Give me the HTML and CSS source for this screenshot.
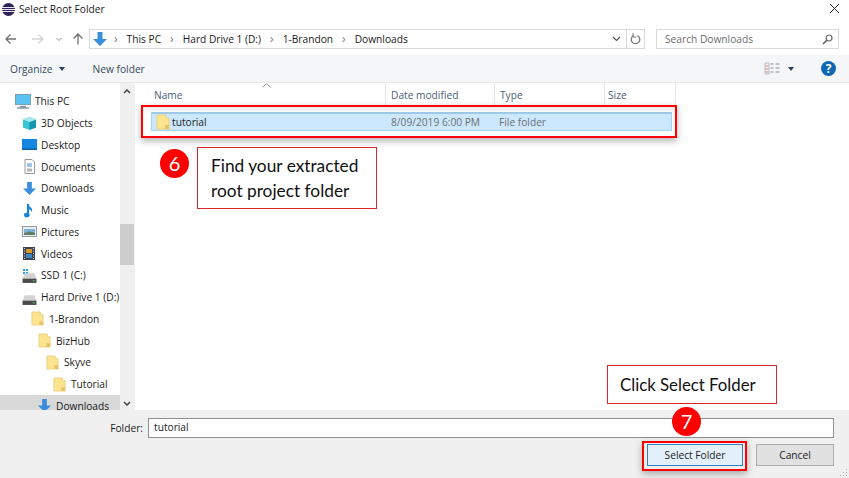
FILE: index.html
```html
<!DOCTYPE html>
<html lang="en">
<head>
    <meta charset="UTF-8">
    <title>Select Root Folder</title>
    <link rel="stylesheet" href="styles.css">
</head>
<body>
    <svg class="defs" width="0" height="0">
        <symbol id="folder" viewBox="0 0 14 16">
            <path d="M1 1h9v3h3v11H1z" fill="#fde48f" stroke="#ecd27e"/>
            <path d="M9 15v-4h4v4z" fill="#e5c365"/>
        </symbol>
        <symbol id="down" viewBox="0 0 16 16">
            <path d="M5.5 1h5v7H15l-7 7-7-7h4.500z" fill="#3a8fdc"/>
        </symbol>
        <symbol id="drive" viewBox="0 0 14 14">
            <path d="M2.500 4h9l2 5H.5z" fill="#d2d2d2"/>
            <rect x="0.500" y="9" width="13" height="4" fill="#4a4a4a"/>
            <rect x="10" y="10.500" width="2" height="1" fill="#4fc35a"/>
        </symbol>
    </svg>

    <div class="titlebar">
        <svg class="app-icon" width="13" height="13" viewBox="0 0 13 13">
            <circle cx="6.500" cy="6.500" r="6.500" fill="#2c2255"/>
            <path d="M0 4.500h13M0 6.500h13M0 8.500h13" stroke="#e8e6f2" stroke-width="1"/>
        </svg>
        <span class="title">Select Root Folder</span>
        <svg class="close" width="11" height="11" viewBox="0 0 11 11">
            <path d="M1 1l9 9M10 1l-9 9" stroke="#222" stroke-width="1" fill="none"/>
        </svg>
    </div>

    <div class="addressrow">
        <div class="nav">
            <svg width="78" height="14" viewBox="0 0 78 14">
                <path d="M11 7H1M5.500 2.500L1 7l4.500 4.500" stroke="#6f6f6f" stroke-width="1.300" fill="none"/>
                <path d="M27 7h11M33.500 2.500L38 7l-4.500 4.500" stroke="#d4d4d4" stroke-width="1.300" fill="none"/>
                <path d="M51.500 6l2.500 2.500L56.500 6" stroke="#8a8a8a" stroke-width="1" fill="none"/>
                <path d="M73 12.500V2M68.500 6.500L73 2l4.500 4.500" stroke="#6f6f6f" stroke-width="1.300" fill="none"/>
            </svg>
        </div>
        <div class="addressbar">
            <svg class="crumb-icon" width="16" height="16"><use href="#down"/></svg>
            <span class="sep">›</span><span>This PC</span>
            <span class="sep">›</span><span>Hard Drive 1 (D:)</span>
            <span class="sep">›</span><span>1-Brandon</span>
            <span class="sep">›</span><span>Downloads</span>
            <svg class="chev" width="9" height="6" viewBox="0 0 9 6">
                <path d="M1 1l3.500 3.500L8 1" stroke="#555" stroke-width="1.200" fill="none"/>
            </svg>
            <div class="refresh">
                <svg width="11" height="12" viewBox="0 0 11 12">
                    <path d="M7.500 2.600A4.300 4.300 0 1 1 3.500 2.600" stroke="#7a7a7a" stroke-width="1.300" fill="none"/>
                    <path d="M3 0v4h3.500" stroke="#7a7a7a" stroke-width="1" fill="none"/>
                </svg>
            </div>
        </div>
        <div class="searchbox">
            <span>Search Downloads</span>
            <svg width="11" height="11" viewBox="0 0 11 11">
                <circle cx="7" cy="4" r="3" stroke="#666" stroke-width="1.200" fill="none"/>
                <path d="M5 6.200L1 10" stroke="#666" stroke-width="1.600"/>
            </svg>
        </div>
    </div>

    <div class="toolbar">
        <span class="tool organize">Organize</span>
        <span class="caret"></span>
        <span class="tool newfolder">New folder</span>
        <svg class="views" width="16" height="13" viewBox="0 0 15 13">
            <path d="M.5 1h4v11h-4z" fill="#f4f4f4" stroke="#b9b9b9"/>
            <path d="M1 4h3M1 7h3M1 10h3" stroke="#d08a8a"/>
            <path d="M6 2h3M11 2h4M6 6h3M11 6h4M6 10h3M11 10h4" stroke="#8a8a8a"/>
        </svg>
        <span class="caret caret-views"></span>
        <span class="help">?</span>
    </div>

    <div class="main">
        <div class="sidebar">
            <div class="navitem"><svg class="pc" width="16" height="15" viewBox="0 0 16 15"><rect x="0.500" y="0.500" width="15" height="10" fill="#5cc2f2" stroke="#7f9fb5"/><path d="M5 12.500h6M2 14h12" stroke="#8a9aa8" stroke-width="1.400"/></svg><span>This PC</span></div>
            <div class="navitem lv1"><svg width="15" height="15" viewBox="0 0 15 15"><path d="M7.500 1L14 3.500v8L7.500 14 1 11.500v-8z" fill="#35c5d4"/><path d="M7.500 6L14 3.500v8L7.500 14z" fill="#1697ad"/><path d="M7.500 1L14 3.500 7.500 6 1 3.500z" fill="#a5e8ef"/></svg><span>3D Objects</span></div>
            <div class="navitem lv1"><svg width="15" height="13" viewBox="0 0 15 13"><rect width="15" height="11" y="1" fill="#1487e0"/><rect y="10.500" width="15" height="1.500" fill="#0d5fa8"/></svg><span>Desktop</span></div>
            <div class="navitem lv1"><svg width="15" height="15" viewBox="0 0 15 15"><path d="M3 .5h7l2.500 2.500v11.500H3z" fill="#fff" stroke="#9a9a9a"/><path d="M5 5h5M5 7h5" stroke="#3b8fd0"/><path d="M5 9.500h5v3H5z" fill="#b5b5b5"/></svg><span>Documents</span></div>
            <div class="navitem lv1"><svg width="15" height="15"><use href="#down"/></svg><span>Downloads</span></div>
            <div class="navitem lv1"><svg width="15" height="15" viewBox="0 0 15 15"><path d="M6 1v10.500" stroke="#1583dd" stroke-width="2"/><ellipse cx="4.800" cy="12" rx="2.800" ry="2.300" fill="#1583dd"/><path d="M6 1c1 3 5 3.500 4 8-1-2-2.500-3-4-3z" fill="#1583dd"/></svg><span>Music</span></div>
            <div class="navitem lv1"><svg width="15" height="13" viewBox="0 0 15 13"><rect x=".5" y="1.500" width="14" height="10" fill="#e6eef5" stroke="#9a9a9a"/><path d="M2 4h11v3l-5 1-6 1z" fill="#7fb2d6"/><path d="M2 8l5-1.500 6 1V10H2z" fill="#5f7f68"/></svg><span>Pictures</span></div>
            <div class="navitem lv1"><svg width="15" height="13" viewBox="0 0 15 13"><rect x="1" y="0" width="12" height="13" fill="#3f4452"/><path d="M2 1.500h1M2 4h1M2 6.500h1M2 9h1M2 11.500h1M11 1.500h1M11 4h1M11 6.500h1M11 9h1M11 11.500h1" stroke="#cfd3da"/><rect x="4" y="2" width="6" height="4" fill="#d89a2c"/><rect x="4" y="7" width="6" height="4" fill="#3f88c5"/></svg><span>Videos</span></div>
            <div class="navitem lv1"><svg width="15" height="15" viewBox="0 0 15 15"><path d="M1 1h2v2H1zM4 1h2v2H4zM1 4h2v2H1zM4 4h2v2H4z" fill="#1aa5ea"/><use href="#drive" y="1"/></svg><span>SSD 1 (C:)</span></div>
            <div class="navitem lv1"><svg width="15" height="15"><use href="#drive" y="1"/></svg><span>Hard Drive 1 (D:)</span></div>
            <div class="navitem lv2"><svg width="13" height="15"><use href="#folder"/></svg><span>1-Brandon</span></div>
            <div class="navitem lv3"><svg width="13" height="15"><use href="#folder"/></svg><span>BizHub</span></div>
            <div class="navitem lv4"><svg width="13" height="15"><use href="#folder"/></svg><span>Skyve</span></div>
            <div class="navitem lv5"><svg width="13" height="15"><use href="#folder"/></svg><span>Tutorial</span></div>
            <div class="navitem lv6 current"><svg width="15" height="15"><use href="#down"/></svg><span>Downloads</span></div>
        </div>
        <div class="scrollbar">
            <svg class="arrow" width="8" height="5" viewBox="0 0 8 5"><path d="M1 4l3-3 3 3" stroke="#444" stroke-width="1.500" fill="none"/></svg>
            <div class="track"><div class="thumb"></div></div>
            <svg class="arrow" width="8" height="5" viewBox="0 0 8 5"><path d="M1 1l3 3 3-3" stroke="#444" stroke-width="1.500" fill="none"/></svg>
        </div>
        <div class="files">
            <svg class="sortmark" width="9" height="5" viewBox="0 0 9 5"><path d="M.5 4.500l4-4 4 4" stroke="#9a9a9a" fill="none"/></svg>
            <div class="fileheader">
                <div class="col col-name">Name</div>
                <div class="col col-date">Date modified</div>
                <div class="col col-type">Type</div>
                <div class="col col-size">Size</div>
            </div>
            <div class="filerow">
                <div class="col-name rowname"><svg width="14" height="16"><use href="#folder"/></svg><span>tutorial</span></div>
                <div class="col-date rowmeta">8/09/2019 6:00 PM</div>
                <div class="col-type rowmeta">File folder</div>
            </div>
        </div>
    </div>

    <div class="footer">
        <div class="folderline">
            <label class="folderlabel">Folder:</label>
            <div class="folderinput">tutorial</div>
        </div>
        <div class="buttons">
            <div class="btn btn-primary">Select Folder</div>
            <div class="btn btn-cancel">Cancel</div>
        </div>
        <svg class="grip" width="8" height="8" viewBox="0 0 8 8"><path d="M6 0h1v1H6zM3 3h1v1H3zM6 3h1v1H6zM0 6h1v1H0zM3 6h1v1H3zM6 6h1v1H6z" fill="#aaa"/></svg>
    </div>

    <!-- annotations drawn over the dialog -->
    <div class="mark mark-row"></div>
    <div class="mark mark-btn"></div>
    <div class="badge badge-6">6</div>
    <div class="callout callout-6">Find your extracted<br>root project folder</div>
    <div class="callout callout-7">Click Select Folder</div>
    <div class="badge badge-7">7</div>
</body>
</html>
```

FILE: styles.css
```css
* {
    box-sizing: border-box;
}
body {
    margin: 0;
    width: 849px;
    height: 478px;
    position: relative;
    overflow: hidden;
    display: flex;
    flex-direction: column;
    background: #fff;
    color: #1a1a1a;
    font-family: "Open Sans", "Noto Sans", sans-serif;
    font-size: 10.2px;
}
.defs {
    position: absolute;
}

/* title bar */
.titlebar {
    height: 29px;
    flex: none;
    display: flex;
    align-items: flex-start;
    padding: 3px 9px 0 2px;
}
.title {
    margin-left: 4px;
    line-height: 13px;
}
.close {
    margin-left: auto;
    margin-top: 0;
}

/* address row */
.addressrow {
    height: 26px;
    flex: none;
    display: flex;
    align-items: flex-start;
    padding-left: 5px;
}
.nav {
    width: 84px;
    padding-top: 3px;
}
.addressbar {
    width: 556px;
    height: 20px;
    border: 1px solid #d9d9d9;
    display: flex;
    align-items: center;
    padding-left: 2px;
}
.addressbar span {
    margin-right: 9px;
}
.addressbar .sep {
    color: #777;
    font-size: 12px;
    line-height: 14px;
    margin-right: 9px;
    margin-left: 0;
}
.crumb-icon {
    margin-right: 6px;
}
.chev {
    margin-left: auto;
    margin-right: 5px;
}
.refresh {
    width: 18px;
    height: 18px;
    border-left: 1px solid #d9d9d9;
    display: flex;
    align-items: center;
    justify-content: center;
}
.searchbox {
    width: 183px;
    height: 20px;
    margin-left: 11px;
    border: 1px solid #d9d9d9;
    color: #6d6d6d;
    display: flex;
    align-items: center;
    justify-content: space-between;
    padding: 0 5px 0 8px;
}

/* toolbar */
.toolbar {
    height: 28px;
    flex: none;
    display: flex;
    align-items: center;
    background: #f5f6f7;
    border-bottom: 1px solid #e8e8e8;
    padding: 0 13px 0 10px;
    color: #3a4a5e;
}
.caret {
    width: 0;
    height: 0;
    border-left: 3.500px solid transparent;
    border-right: 3.500px solid transparent;
    border-top: 4px solid #2b3e5c;
    margin-left: 6px;
}
.newfolder {
    margin-left: 28px;
}
.views {
    margin-left: auto;
}
.caret-views {
    margin-left: 8px;
}
.help {
    width: 15px;
    height: 15px;
    margin-left: 27px;
    border-radius: 50%;
    background: #0f67b8;
    color: #fff;
    font-size: 12px;
    font-weight: 700;
    line-height: 15px;
    text-align: center;
}

/* sidebar and file list */
.main {
    height: 327px;
    flex: none;
    display: flex;
}
.sidebar {
    width: 120px;
    flex: none;
    padding-top: 7.500px;
    overflow: hidden;
}
.navitem {
    height: 21.750px;
    display: flex;
    align-items: center;
    padding-left: 15px;
    white-space: nowrap;
}
.navitem svg {
    flex: none;
    margin-right: 4px;
}
.lv1 {
    padding-left: 22px;
}
.lv2 {
    padding-left: 31px;
}
.lv3 {
    padding-left: 38px;
}
.lv4 {
    padding-left: 46px;
}
.lv5 {
    padding-left: 53px;
}
.lv6 {
    padding-left: 37px;
}
.lv2 svg,
.lv3 svg,
.lv4 svg,
.lv5 svg {
    margin-right: 5px;
}
.current {
    background: #d9d9d9;
}
.scrollbar {
    width: 15px;
    flex: none;
    background: #f0f0f0;
    display: flex;
    flex-direction: column;
    align-items: center;
    padding: 6px 1px 4px 0;
}
.track {
    flex: 1;
    width: 100%;
    padding-top: 130px;
}
.thumb {
    height: 41px;
    background: #cdcdcd;
}
.files {
    flex: 1;
    position: relative;
}
.sortmark {
    position: absolute;
    left: 127px;
    top: 0;
}
.fileheader {
    height: 22px;
    display: flex;
    color: #4c607a;
}
.col {
    border-right: 1px solid #e5e5e5;
    padding-top: 5px;
    padding-left: 5px;
}
.col-name {
    width: 251px;
    padding-left: 19px;
}
.col-date {
    width: 109px;
}
.col-type {
    width: 110px;
}
.col-size {
    width: 71px;
    padding-left: 3px;
}
.filerow {
    margin: 7px 0 0 16px;
    width: 521px;
    height: 19px;
    display: flex;
    align-items: center;
    background: #cce8ff;
    border: 1px solid #a5d3f5;
    border-top: 2px solid #9fc9e8;
}
.rowname {
    width: 234px;
    display: flex;
    align-items: center;
    padding-left: 4px;
    flex: none;
}
.rowname span {
    margin-left: 2px;
}
.rowmeta {
    color: #6d6d6d;
    flex: none;
}
.filerow .col-date {
    width: 113px;
    padding-left: 5px;
}

/* bottom strip */
.footer {
    flex: 1;
    background: #f0f0f0;
    position: relative;
    padding: 8px 15px 0 0;
}
.folderline {
    display: flex;
    align-items: center;
    justify-content: flex-end;
}
.folderlabel {
    margin-right: 5px;
}
.folderinput {
    width: 686px;
    height: 20px;
    background: #fff;
    border: 1px solid #8f8f8f;
    padding-left: 5px;
    line-height: 17px;
}
.buttons {
    display: flex;
    justify-content: flex-end;
    gap: 13px;
    margin-top: 6px;
}
.btn {
    height: 22px;
    line-height: 20px;
    text-align: center;
}
.btn-primary {
    width: 96px;
    background: #e3f0f9;
    border: 1px solid #2f80c8;
}
.btn-cancel {
    width: 78px;
    background: #e1e1e1;
    border: 1px solid #adadad;
}
.grip {
    position: absolute;
    right: 1px;
    bottom: 1px;
}

/* annotations */
.mark {
    position: absolute;
    border: 2px solid #f00;
    box-shadow: 0 3px 7px rgba(0, 0, 0, 0.3);
}
.mark-row {
    left: 141px;
    top: 105px;
    width: 536px;
    height: 33px;
    box-shadow: 0 3px 7px rgba(0, 0, 0, 0.3), inset 0 4px 3px rgba(0, 0, 0, 0.07);
}
.mark-btn {
    left: 642px;
    top: 441px;
    width: 105px;
    height: 30px;
}
.badge {
    position: absolute;
    width: 29px;
    height: 29px;
    border-radius: 50%;
    background: #f00;
    color: #fff;
    font-family: Lato, "Open Sans", sans-serif;
    font-size: 20px;
    line-height: 28px;
    text-align: center;
}
.badge-6 {
    left: 160px;
    top: 149px;
}
.badge-7 {
    left: 672px;
    top: 407px;
}
.callout {
    position: absolute;
    background: #fff;
    border: 1px solid #e0242c;
    color: #111;
    font-family: Lato, "Open Sans", sans-serif;
    font-size: 17.300px;
    line-height: 25px;
}
.callout-6 {
    left: 197px;
    top: 147px;
    width: 180px;
    height: 62px;
    padding: 5px 0 0 13px;
}
.callout-7 {
    left: 607px;
    top: 365px;
    width: 170px;
    height: 39px;
    padding: 6px 0 0 12px;
    font-size: 16.800px;
}
```
